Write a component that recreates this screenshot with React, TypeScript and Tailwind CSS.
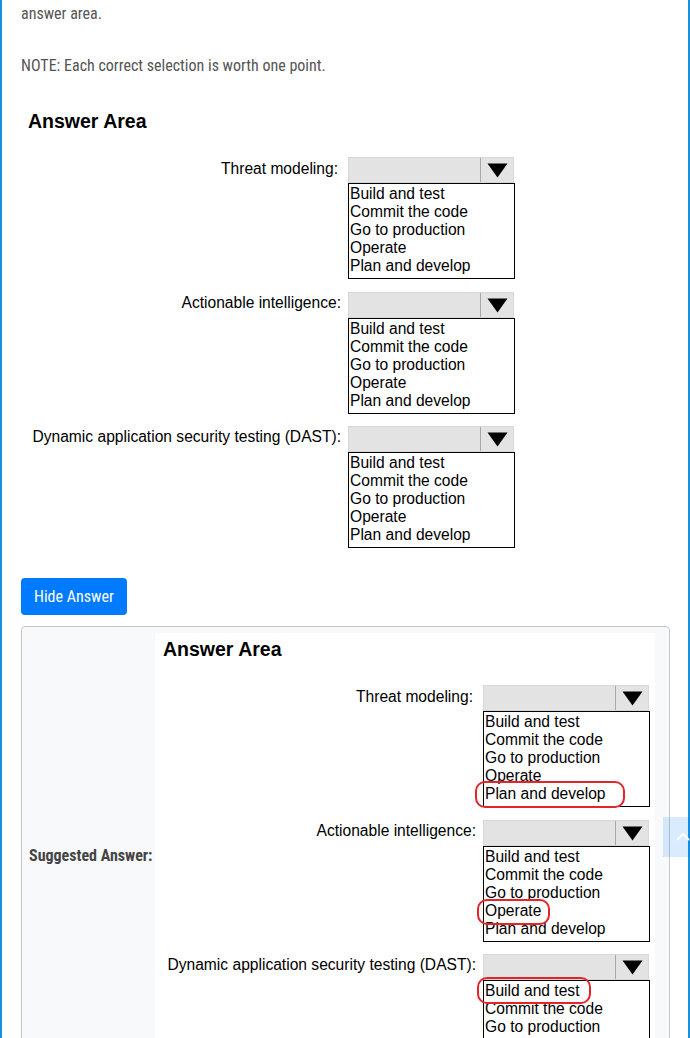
import React from 'react';

const OPTIONS = ['Build and test', 'Commit the code', 'Go to production', 'Operate', 'Plan and develop'];

type Mark = { left: number; width: number; top: number; height: number };

interface Row {
  label: string;
  mark?: Mark;
}

const condensed = { fontFamily: '"Roboto Condensed", "Liberation Sans Narrow", "Arial Narrow", Roboto, sans-serif' };

const Dropdown: React.FC<{ mark?: Mark }> = ({ mark }) => (
  <div className="w-[167px]">
    <div className="flex h-[26px] w-[166px] border border-[#d8d8d8] bg-[#e3e3e3]">
      <div className="flex-1" />
      <div className="flex w-[33px] items-center justify-center border-l border-[#a8a8a8]">
        <svg width="21" height="15" viewBox="0 0 21 15">
          <polygon points="0.5,0.5 20.5,0.5 10.5,14.5" fill="#000" />
        </svg>
      </div>
    </div>
    <div className="relative border border-black bg-white pt-[1px] pb-[3px] pl-[1px]">
      {OPTIONS.map((o) => (
        <div key={o} className="h-[18px] text-[15.6px] leading-[18px] text-black">
          {o}
        </div>
      ))}
      {mark && (
        <div
          className="absolute rounded-[10px] border-2 border-[#e3242b]"
          style={{ left: mark.left, width: mark.width, top: mark.top, height: mark.height }}
        />
      )}
    </div>
  </div>
);

const AnswerImage: React.FC<{ rows: Row[] }> = ({ rows }) => (
  <div className="h-[445px] w-[500px] bg-white" style={{ fontFamily: '"Liberation Sans", Arial, sans-serif' }}>
    <div className="pl-[8px] pt-[5px] text-[19.5px] font-bold leading-[22px] text-black">Answer Area</div>
    <div className="mt-[25px] flex flex-col gap-[13px]">
      {rows.map((r, i) => (
        <div key={r.label} className={i === 2 ? '-mt-[1px] flex gap-[8px]' : 'flex gap-[8px]'}>
          <div
            className={
              i === 0
                ? 'w-[318px] pt-[2px] text-right text-[15.6px] leading-[20px] text-black'
                : 'w-[321px] -mr-[3px] pt-[1px] text-right text-[15.6px] leading-[20px] text-black'
            }
          >
            {r.label}
          </div>
          <div className="ml-[2px]">
            <Dropdown mark={r.mark} />
          </div>
        </div>
      ))}
    </div>
  </div>
);

const plain: Row[] = [
  { label: 'Threat modeling:' },
  { label: 'Actionable intelligence:' },
  { label: 'Dynamic application security testing (DAST):' },
];

const answered: Row[] = [
  { label: 'Threat modeling:', mark: { left: -9, width: 150, top: 69, height: 27 } },
  { label: 'Actionable intelligence:', mark: { left: -7, width: 73, top: 52, height: 26 } },
  { label: 'Dynamic application security testing (DAST):', mark: { left: -7, width: 114, top: -4, height: 27 } },
];

export default function App() {
  return (
    <div className="relative h-[1038px] w-[690px] overflow-hidden bg-white">
      <div className="h-full border-x-2 border-[#1591e0] pl-[19px] pr-[19px]">
        <div className="text-[16px] leading-[24px] text-[#555]" style={condensed}>
          <p className="pt-[2px]">answer area.</p>
          <p className="mt-[28px]">NOTE: Each correct selection is worth one point.</p>
        </div>

        <div className="mt-[27px] -ml-[1px]">
          <AnswerImage rows={plain} />
        </div>

        <button
          className="mt-[28px] h-[37px] rounded-[4px] bg-[#007bff] px-[13px] text-[16px] text-white"
          style={condensed}
        >
          Hide Answer
        </button>

        <div className="mt-[11px] mr-[-1px] flex rounded-[4px] border border-[#c6c6c6] bg-[#f8f9fa]">
          <div className="flex w-[133px] items-center pl-[7px] text-[16px] font-bold text-[#444]" style={condensed}>
            Suggested Answer:
          </div>
          <div className="py-[6px]">
            <AnswerImage rows={answered} />
          </div>
        </div>
      </div>

      <div className="absolute left-[663px] top-[817px] flex h-[40px] w-[40px] items-center justify-center bg-[rgba(0,123,255,0.15)]">
        <svg width="16" height="10" viewBox="0 0 16 10" fill="none" stroke="#fff" strokeWidth="2">
          <polyline points="2,8 8,2 14,8" />
        </svg>
      </div>
    </div>
  );
}
